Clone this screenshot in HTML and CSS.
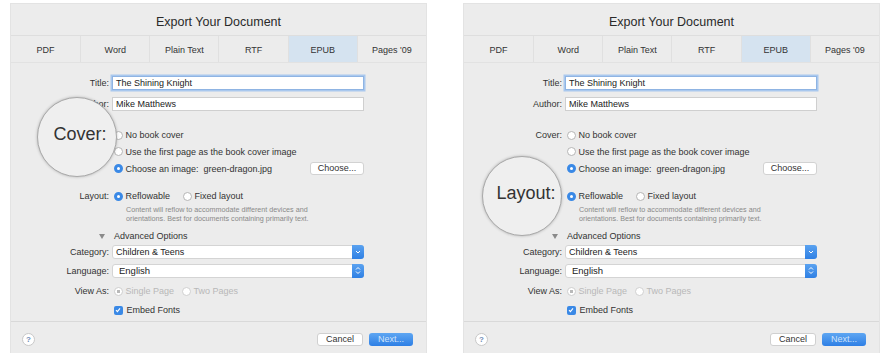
FILE: index.html
```html
<!DOCTYPE html>
<html lang="en">
<head>
    <meta charset="UTF-8">
    <title>Export Your Document</title>
    <link rel="stylesheet" href="styles.css">
</head>
<body>
    <div class="page">
        <!-- left: Cover loupe -->
        <div class="dialog">
            <div class="dialog-title">Export Your Document</div>
            <div class="tabs">
                <div class="tab">PDF</div>
                <div class="tab">Word</div>
                <div class="tab">Plain Text</div>
                <div class="tab">RTF</div>
                <div class="tab active">EPUB</div>
                <div class="tab">Pages '09</div>
            </div>
            <div class="form">
                <div class="row row-title">
                    <span class="lbl">Title:</span>
                    <div class="field focus">The Shining Knight</div>
                </div>
                <div class="row row-author">
                    <span class="lbl">Author:</span>
                    <div class="field">Mike Matthews</div>
                </div>
                <div class="row row-cover">
                    <span class="lbl">Cover:</span>
                    <div class="opt"><span class="radio"></span>No book cover</div>
                </div>
                <div class="row row-opt">
                    <span class="lbl"></span>
                    <div class="opt"><span class="radio"></span>Use the first page as the book cover image</div>
                </div>
                <div class="row row-opt">
                    <span class="lbl"></span>
                    <div class="opt"><span class="radio on"></span>Choose an image:&nbsp; green-dragon.jpg</div>
                    <div class="btn choose">Choose...</div>
                </div>
                <div class="row row-layout">
                    <span class="lbl">Layout:</span>
                    <div class="opt"><span class="radio on"></span>Reflowable</div>
                    <div class="opt opt-gap"><span class="radio"></span>Fixed layout</div>
                </div>
                <div class="desc">Content will reflow to accommodate different devices and<br>orientations. Best for documents containing primarily text.</div>
                <div class="row row-adv">
                    <span class="lbl"><svg class="tri" width="6" height="5" viewBox="0 0 6 5"><path d="M0 0 H6 L3 5 Z" fill="#8a8a8a"/></svg></span>
                    <div class="adv">Advanced Options</div>
                </div>
                <div class="row row-select">
                    <span class="lbl">Category:</span>
                    <div class="select">Children &amp; Teens
                        <span class="stepper"><svg width="6" height="6" viewBox="0 0 6 6"><path d="M1 2 L3 4 L5 2" fill="none" stroke="#fff" stroke-width="1"/></svg></span>
                    </div>
                </div>
                <div class="row row-select">
                    <span class="lbl">Language:</span>
                    <div class="select lang">English
                        <span class="stepper"><svg width="6" height="9" viewBox="0 0 6 9"><path d="M1 3.5 L3 1.5 L5 3.5 M1 5.5 L3 7.5 L5 5.5" fill="none" stroke="#fff" stroke-width="1"/></svg></span>
                    </div>
                </div>
                <div class="row row-view">
                    <span class="lbl">View As:</span>
                    <div class="opt off"><span class="radio dis dot"></span>Single Page</div>
                    <div class="opt off opt-gap2"><span class="radio dis"></span>Two Pages</div>
                </div>
                <div class="row row-embed">
                    <span class="lbl"></span>
                    <div class="opt"><span class="check"><svg width="8" height="8" viewBox="0 0 8 8"><path d="M2 4.2 L3.4 5.6 L6 2.4" fill="none" stroke="#fff" stroke-width="1.1"/></svg></span>Embed Fonts</div>
                </div>
            </div>
            <div class="footer">
                <div class="help">?</div>
                <div class="actions">
                    <div class="btn cancel">Cancel</div>
                    <div class="btn next">Next...</div>
                </div>
            </div>
            <div class="loupe loupe-cover">Cover:</div>
        </div>

        <!-- right: Layout loupe -->
        <div class="dialog">
            <div class="dialog-title">Export Your Document</div>
            <div class="tabs">
                <div class="tab">PDF</div>
                <div class="tab">Word</div>
                <div class="tab">Plain Text</div>
                <div class="tab">RTF</div>
                <div class="tab active">EPUB</div>
                <div class="tab">Pages '09</div>
            </div>
            <div class="form">
                <div class="row row-title">
                    <span class="lbl">Title:</span>
                    <div class="field focus">The Shining Knight</div>
                </div>
                <div class="row row-author">
                    <span class="lbl">Author:</span>
                    <div class="field">Mike Matthews</div>
                </div>
                <div class="row row-cover">
                    <span class="lbl">Cover:</span>
                    <div class="opt"><span class="radio"></span>No book cover</div>
                </div>
                <div class="row row-opt">
                    <span class="lbl"></span>
                    <div class="opt"><span class="radio"></span>Use the first page as the book cover image</div>
                </div>
                <div class="row row-opt">
                    <span class="lbl"></span>
                    <div class="opt"><span class="radio on"></span>Choose an image:&nbsp; green-dragon.jpg</div>
                    <div class="btn choose">Choose...</div>
                </div>
                <div class="row row-layout">
                    <span class="lbl">Layout:</span>
                    <div class="opt"><span class="radio on"></span>Reflowable</div>
                    <div class="opt opt-gap"><span class="radio"></span>Fixed layout</div>
                </div>
                <div class="desc">Content will reflow to accommodate different devices and<br>orientations. Best for documents containing primarily text.</div>
                <div class="row row-adv">
                    <span class="lbl"><svg class="tri" width="6" height="5" viewBox="0 0 6 5"><path d="M0 0 H6 L3 5 Z" fill="#8a8a8a"/></svg></span>
                    <div class="adv">Advanced Options</div>
                </div>
                <div class="row row-select">
                    <span class="lbl">Category:</span>
                    <div class="select">Children &amp; Teens
                        <span class="stepper"><svg width="6" height="6" viewBox="0 0 6 6"><path d="M1 2 L3 4 L5 2" fill="none" stroke="#fff" stroke-width="1"/></svg></span>
                    </div>
                </div>
                <div class="row row-select">
                    <span class="lbl">Language:</span>
                    <div class="select lang">English
                        <span class="stepper"><svg width="6" height="9" viewBox="0 0 6 9"><path d="M1 3.5 L3 1.5 L5 3.5 M1 5.5 L3 7.5 L5 5.5" fill="none" stroke="#fff" stroke-width="1"/></svg></span>
                    </div>
                </div>
                <div class="row row-view">
                    <span class="lbl">View As:</span>
                    <div class="opt off"><span class="radio dis dot"></span>Single Page</div>
                    <div class="opt off opt-gap2"><span class="radio dis"></span>Two Pages</div>
                </div>
                <div class="row row-embed">
                    <span class="lbl"></span>
                    <div class="opt"><span class="check"><svg width="8" height="8" viewBox="0 0 8 8"><path d="M2 4.2 L3.4 5.6 L6 2.4" fill="none" stroke="#fff" stroke-width="1.1"/></svg></span>Embed Fonts</div>
                </div>
            </div>
            <div class="footer">
                <div class="help">?</div>
                <div class="actions">
                    <div class="btn cancel">Cancel</div>
                    <div class="btn next">Next...</div>
                </div>
            </div>
            <div class="loupe loupe-layout">Layout:</div>
        </div>
    </div>
</body>
</html>
```

FILE: styles.css
```css
body {
    margin: 0;
    padding: 0;
    background-color: #fff;
    font-family: "Liberation Sans", Arial, sans-serif;
    color: #333;
}
.page {
    display: flex;
    gap: 36px;
    padding: 3px 0 0 10px;
}
.dialog {
    position: relative;
    width: 417px;
    height: 350px;
    background-color: #ececec;
    border: 1px solid #e3e3e3;
    border-bottom: none;
    box-sizing: border-box;
    display: flex;
    flex-direction: column;
    overflow: hidden;
}
.dialog-title {
    height: 32px;
    line-height: 37px;
    text-align: center;
    font-size: 12.5px;
    color: #2a2a2a;
    border-bottom: 1px solid #dedede;
    box-sizing: border-box;
}
.tabs {
    display: grid;
    grid-template-columns: repeat(6, 1fr);
    height: 27px;
    border-bottom: 1px solid #e2e2e2;
    box-sizing: border-box;
}
.tab {
    font-size: 9px;
    color: #333;
    display: flex;
    align-items: center;
    justify-content: center;
    padding-top: 2px;
    border-left: 1px solid #e0e0e0;
}
.tab:first-child {
    border-left: none;
}
.tab.active {
    background-color: #d5e3f0;
}

/* form */
.form {
    height: 258px;
    padding-top: 13px;
    box-sizing: border-box;
    font-size: 9px;
}
.row {
    display: flex;
    align-items: center;
}
.lbl {
    width: 98px;
    flex: none;
    text-align: right;
    margin-right: 3px;
    color: #333;
}
.field {
    width: 252px;
    height: 14px;
    box-sizing: border-box;
    background-color: #fff;
    border: 1px solid #cfcfcf;
    padding-left: 3px;
    line-height: 12px;
    color: #222;
}
.field.focus {
    border-color: #8fb4e3;
    box-shadow: 0 0 0 1.5px #a9c8ee;
}
.row-author {
    margin-top: 7px;
}
.row-cover {
    margin-top: 16px;
    height: 16px;
}
.row-opt {
    height: 17px;
}
.opt {
    display: flex;
    align-items: center;
    color: #333;
}
.radio {
    width: 9px;
    height: 9px;
    border-radius: 50%;
    background-color: #fff;
    border: 1px solid #b5b5b5;
    box-sizing: border-box;
    margin: 0 3px 0 1.5px;
    flex: none;
}
.radio.on {
    border: 3px solid #3a89e6;
    background-color: #fff;
}
.radio.dis {
    border-color: #d0d0d0;
}
.radio.dot {
    background: radial-gradient(circle, #b9b9b9 1.5px, #fff 2px);
}
.btn {
    font-size: 9px;
    text-align: center;
    border-radius: 3px;
    box-sizing: border-box;
}
.choose {
    margin-left: auto;
    width: 54px;
    height: 13px;
    line-height: 11px;
    background-color: #fff;
    border: 1px solid #d2d2d2;
    color: #333;
    margin-right: 62px;
}
.row-layout {
    margin-top: 11px;
    height: 16px;
}
.opt-gap {
    margin-left: 11px;
}
.desc {
    margin: 1px 0 0 115px;
    font-size: 7.2px;
    line-height: 9px;
    color: #8a8a8a;
}
.row-adv {
    margin-top: 5px;
    height: 16px;
}
.tri {
    margin-right: 4px;
    vertical-align: middle;
}
.adv {
    margin-left: 2px;
}
.row-select {
    height: 15px;
    margin-top: 4px;
}
.row-adv + .row-select {
    margin-top: 0;
}
.select {
    position: relative;
    width: 252px;
    height: 14px;
    box-sizing: border-box;
    background-color: #fff;
    border: 1px solid #d4d4d4;
    border-radius: 3px;
    padding-left: 3px;
    line-height: 12px;
    color: #222;
}
.select.lang {
    padding-left: 6px;
    font-size: 9.5px;
}
.stepper {
    position: absolute;
    right: -1px;
    top: -1px;
    width: 12px;
    height: 14px;
    border-radius: 0 3px 3px 0;
    background: linear-gradient(#5aa2f0, #2f80e4);
    display: flex;
    align-items: center;
    justify-content: center;
}
.row-view {
    margin-top: 5px;
    height: 16px;
}
.opt.off {
    color: #b8b8b8;
}
.opt-gap2 {
    margin-left: 6px;
}
.row-embed {
    margin-top: 3px;
    height: 16px;
}
.check {
    width: 9px;
    height: 9px;
    border-radius: 2px;
    background-color: #3a89e6;
    margin: 0 4px 0 1.5px;
    display: flex;
    align-items: center;
    justify-content: center;
}

/* footer */
.footer {
    flex: 1;
    border-top: 1px solid #d9d9d9;
    display: flex;
    align-items: center;
    padding: 4px 13px 0 11px;
}
.help {
    width: 11px;
    height: 11px;
    border-radius: 50%;
    background-color: #fff;
    border: 1px solid #c8c8c8;
    font-size: 8px;
    line-height: 11px;
    text-align: center;
    color: #6d8db5;
    font-weight: bold;
}
.actions {
    margin-left: auto;
    display: flex;
    gap: 6px;
}
.cancel {
    width: 46px;
    height: 13px;
    line-height: 11px;
    background-color: #fff;
    border: 1px solid #d0d0d0;
    color: #333;
}
.next {
    width: 44px;
    height: 13px;
    line-height: 13px;
    background: linear-gradient(#5ea6f2, #2e7fe5);
    color: #cfe3fb;
}

/* magnifier */
.loupe {
    position: absolute;
    width: 80px;
    height: 80px;
    border-radius: 50%;
    box-sizing: border-box;
    border: 1.5px solid #a9a9a9;
    background-color: #efefef;
    box-shadow: 0 0 3px rgba(0, 0, 0, 0.25);
    display: flex;
    align-items: center;
    justify-content: center;
    font-size: 18px;
    color: #333;
}
.loupe-cover {
    left: 26px;
    top: 93px;
    padding: 0 0 6px 6px;
}
.loupe-layout {
    left: 18px;
    top: 152px;
    padding: 0 0 5px 8px;
}
```
